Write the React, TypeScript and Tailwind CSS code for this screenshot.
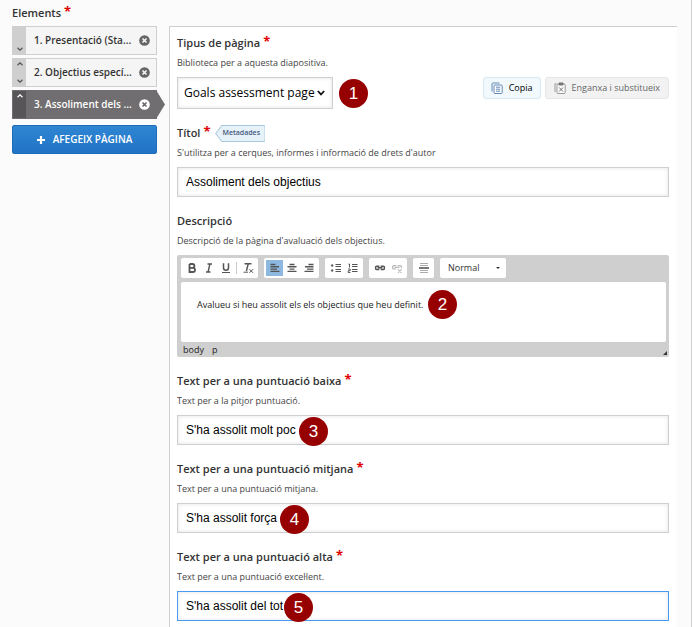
import { ReactNode, useState } from "react"

type Step = {
  id: number,
  label: string
};

type FieldProps = {
  id: string,
  label: string,
  description: string,
  required?: boolean,
  extra?: ReactNode,
  children: ReactNode
};

type TextFieldProps = {
  id: string,
  label: string,
  description: string,
  value: string,
  required?: boolean,
  focused?: boolean,
  extra?: ReactNode,
  children?: ReactNode
};

const steps: Step[] = [
  { id: 1, label: "1. Presentació (Sta..." },
  { id: 2, label: "2. Objectius especí..." },
  { id: 3, label: "3. Assoliment dels ..." }
];

function Required() {
  return <span className="ml-[3px] text-[13px] leading-4 font-bold text-[#e00000]" aria-hidden="true">*</span>
}

function Marker({ n, className }: { n: number, className: string }) {
  return (
    <span className={"absolute flex h-[29px] w-[29px] items-center justify-center rounded-full bg-[#970000] font-['Liberation_Sans',sans-serif] text-[17px] text-white " + className}>
      {n}
    </span>
  )
}

function Chevron({ up }: { up?: boolean }) {
  return (
    <svg viewBox="0 0 6 4" className="h-1 w-1.5" fill="none" stroke="currentColor" strokeWidth="1.2">
      <path d={up ? "M0.5 3.2 3 0.8 5.5 3.2" : "M0.5 0.8 3 3.2 5.5 0.8"} />
    </svg>
  )
}

function Field(props: FieldProps) {
  return (
    <div className="mb-3.5">
      <div className="flex h-5 items-center">
        <label htmlFor={props.id} className="flex h-5 text-[11px] leading-5 font-semibold text-[#333]">
          {props.label}
          {props.required && <Required />}
        </label>
        {props.extra}
      </div>
      <p className="mb-1 text-[9px] leading-5 text-[#444]">{props.description}</p>
      {props.children}
    </div>
  )
}

function TextField(props: TextFieldProps) {
  const [value, setValue] = useState<string>(props.value);
  const border = props.focused ? "border-[#4a9bf0]" : "border-[#cfcfcf]";

  return (
    <Field id={props.id} label={props.label} description={props.description} required={props.required} extra={props.extra}>
      <div className="relative">
        <input id={props.id} type="text" value={value} onChange={e => setValue(e.target.value)}
          className={"block h-[30px] w-full border bg-white px-2 font-['Liberation_Sans',sans-serif] text-[12px] text-black shadow-[inset_0_0_4px_#e4e4e4] outline-none " + border} />
        {props.children}
      </div>
    </Field>
  )
}

function ToolGroup({ children }: { children: ReactNode }) {
  return <div className="flex h-5 items-center rounded-[2px] bg-white px-0.5">{children}</div>
}

function Tool({ name, active, faded, children }: { name: string, active?: boolean, faded?: boolean, children: ReactNode }) {
  return (
    <button type="button" aria-label={name}
      className={"flex h-4 w-[17px] items-center justify-center text-[#555] " + (active ? "bg-[#8db8df] " : "") + (faded ? "opacity-40" : "")}>
      <svg viewBox="0 0 12 12" className="h-3 w-3" fill="none" stroke="currentColor" strokeWidth="1.2">{children}</svg>
    </button>
  )
}

function Toolbar() {
  return (
    <div className="flex flex-wrap gap-1.5">
      <ToolGroup>
        <Tool name="Negreta"><path strokeWidth="1.8" d="M3.5 2h3a1.9 1.9 0 0 1 0 3.8h-3M3.5 5.8h3.4a2.1 2.1 0 0 1 0 4.2H3.5zM3.5 2v8" /></Tool>
        <Tool name="Cursiva"><path strokeWidth="1.4" d="M4.5 2h4.5M3 10h4.5M6.9 2 5.1 10" /></Tool>
        <Tool name="Subratllat"><path strokeWidth="1.5" d="M3.5 1.2v4.6a2.5 2.5 0 0 0 5 0V1.2" /><path strokeWidth="1" d="M2 10.5h8" /></Tool>
        <span className="flex w-[5px] justify-center"><span className="h-3 w-px bg-[#ccc]" /></span>
        <Tool name="Elimina el format"><path strokeWidth="1.4" d="M2.5 1.8h7M6.2 2 4.4 9" /><path strokeWidth="1" d="M1.5 10.2h4.5M7.5 7.2l3.5 3.6M11 7.2 7.5 10.8" /></Tool>
      </ToolGroup>
      <ToolGroup>
        <Tool name="Esquerra" active><path strokeWidth="1.4" d="M1.5 2.5h5M1.5 4.8h8.5M1.5 7.1h6.5M1.5 9.4h9" /></Tool>
        <Tool name="Centre"><path strokeWidth="1.4" d="M3.5 2.5h5M1.5 4.8h9M3.5 7.1h5M1.5 9.4h9" /></Tool>
        <Tool name="Dreta"><path strokeWidth="1.4" d="M5.5 2.5h5M2 4.8h8.5M4 7.1h6.5M1.5 9.4h9" /></Tool>
      </ToolGroup>
      <ToolGroup>
        <Tool name="Llista de pics"><circle cx="2.2" cy="3.5" r="1" fill="currentColor" strokeWidth="0.4" /><circle cx="2.2" cy="8.5" r="1" fill="currentColor" strokeWidth="0.4" /><path strokeWidth="1" d="M5.5 2.5h5.5M5.5 4.5h5.5M5.5 7.5h5.5M5.5 9.5h5.5" /></Tool>
        <Tool name="Llista numerada"><path strokeWidth="1" d="M1.5 2h1v3.5M1.2 7h2v1.7h-2v1.8h2.2M5 2.5h5.5M5 4.5h5.5M5 7.5h5.5M5 9.5h5.5" /></Tool>
      </ToolGroup>
      <ToolGroup>
        <Tool name="Enllaç"><path strokeWidth="1.5" d="M5.3 4.2H2.6a1 1 0 0 0-1 1v1.2a1 1 0 0 0 1 1h2.7M6.7 4.2h2.7a1 1 0 0 1 1 1v1.2a1 1 0 0 1-1 1H6.7M3.6 5.8h4.8" /></Tool>
        <Tool name="Treu l'enllaç" faded><path d="M5.3 3.7H2.6a1 1 0 0 0-1 1v1.2a1 1 0 0 0 1 1h2.2M6.7 3.7h2.7a1 1 0 0 1 1 1v1.4M3.6 5.3h4.8M7 7.3l3.5 3.5M10.5 7.3 7 10.8" /></Tool>
      </ToolGroup>
      <ToolGroup>
        <Tool name="Línia horitzontal"><path strokeWidth="1" stroke="#aaa" d="M2 1.5h8M2 3.5h8M2 8.5h8M2 10.5h8" /><path strokeWidth="1.6" d="M1 6h10" /></Tool>
      </ToolGroup>
      <div className="relative flex h-5 w-[66px] items-center">
        <select aria-label="Format" className="h-5 w-full appearance-none rounded-[2px] bg-white pl-2 text-[9px] text-[#333] outline-none">
          <option>Normal</option>
        </select>
        <svg viewBox="0 0 4 2" className="pointer-events-none absolute right-1.5 h-0.5 w-1" fill="#333"><path d="M0 0h4L2 2z" /></svg>
      </div>
    </div>
  )
}

function Sidebar() {
  const [current, setCurrent] = useState<number>(3);

  return (
    <nav className="w-[145px] shrink-0">
      <ul className="flex flex-col gap-[3px]">
        {steps.map((step, i) => {
          const active = step.id === current;
          return (
            <li key={step.id} className={"relative flex h-[29px] items-stretch border " + (active ? "border-[#706e70] bg-[#706e70] text-white" : "border-[#cfcfcf] bg-[#f5f5f5] text-[#333]")}>
              <div className={"flex w-[13px] shrink-0 flex-col items-center justify-between py-[3px] " + (active ? "bg-[#575558] text-white" : "bg-[#cfcfcf] text-[#555]")}>
                {i > 0 ? <Chevron up /> : <span />}
                {i < steps.length - 1 ? <Chevron /> : <span />}
              </div>
              <button type="button" onClick={() => setCurrent(step.id)} className="grow pl-2 text-left text-[10px] font-semibold whitespace-nowrap">{step.label}</button>
              <button type="button" aria-label="Elimina" className="mr-1.5 shrink-0">
                <svg viewBox="0 0 12 12" className="h-[11px] w-[11px]">
                  <circle cx="6" cy="6" r="5.8" fill={active ? "#fff" : "#666"} />
                  <path d="M3.8 3.8l4.4 4.4M8.2 3.8 3.8 8.2" stroke={active ? "#666" : "#f5f5f5"} strokeWidth="1.7" />
                </svg>
              </button>
              {active && <svg viewBox="0 0 8 29" className="absolute -inset-y-px left-full h-[29px] w-[9px]" preserveAspectRatio="none" fill="#706e70"><path d="M0 0l8 14.5L0 29z" /></svg>}
            </li>
          )
        })}
      </ul>
      <button type="button" className="mt-1.5 flex h-[29px] w-full items-center justify-center gap-2 rounded-[2px] border border-[#1f6db8] bg-linear-to-b from-[#2f86d2] to-[#2173c6] text-[10px] font-semibold text-white">
        <svg viewBox="0 0 8 8" className="h-2 w-2" stroke="#fff" strokeWidth="2.2"><path d="M4 0v8M0 4h8" /></svg>
        AFEGEIX PÀGINA
      </button>
    </nav>
  )
}

export default function App() {
  const [body, setBody] = useState<string>("Avalueu si heu assolit els els objectius que heu definit.");

  const metadata = (
    <button type="button" className="relative ml-1 flex h-[17px] items-center text-[7px] font-semibold text-[#44597f]">
      <svg viewBox="0 0 52 16" className="absolute inset-0 h-full w-full" preserveAspectRatio="none">
        <path d="M7 .5h43a1.5 1.5 0 0 1 1.5 1.5v12a1.5 1.5 0 0 1-1.5 1.5H7L.7 8z" fill="#e6f1f8" stroke="#a9c8dc" />
      </svg>
      <span className="relative pr-[5px] pl-2">Metadades</span>
    </button>
  );

  return (
    <div className="min-h-screen bg-white pr-2 font-['Open_Sans',sans-serif]">
      <main className="min-h-screen border-r border-[#cfcfcf] bg-[#fbfbfb] pl-3">
        <h1 className="flex h-[26px] pt-[3px] text-[11px] leading-5 font-semibold text-[#333]">Elements<Required /></h1>
        <div className="flex items-start gap-3">
          <Sidebar />
          <section className="mr-3.5 min-w-0 grow border-t border-l border-[#cfcfcf] bg-white pt-1.5 pr-2 pl-[7px]">
            <Field id="type" label="Tipus de pàgina" description="Biblioteca per a aquesta diapositiva." required>
              <div className="flex items-start justify-between">
                <div className="relative flex items-center">
                  <select id="type" className="h-8 w-[156px] appearance-none border border-[#cfcfcf] bg-white pl-1.5 text-[12px] text-black shadow-[inset_0_0_4px_#e4e4e4] outline-none">
                    <option>Goals assessment page</option>
                  </select>
                  <svg viewBox="0 0 8 6" className="pointer-events-none absolute right-2 h-1.5 w-2" fill="none" stroke="#111" strokeWidth="1.7"><path d="M.8 1 4 4.4 7.2 1" /></svg>
                  <Marker n={1} className="top-0.5 left-[162px]" />
                </div>
                <div className="flex gap-1">
                  <button type="button" className="flex h-[22px] items-center gap-1.5 rounded-[3px] border border-[#d7eaf0] bg-[#f1f9fd] px-[7px] text-[9px] text-black">
                    <svg viewBox="0 0 12 12" className="h-3 w-3" fill="none" stroke="#6288b5">
                      <path d="M1 9.5V1.8A1 1 0 0 1 2 1h6.5" /><rect x="3" y="3" width="8.2" height="8.5" rx="1" fill="#fff" /><path d="M5 5.2h4.2M5 7.2h4.2M5 9.2h4.2" />
                    </svg>
                    Copia
                  </button>
                  <button type="button" className="flex h-[22px] items-center gap-1.5 rounded-[3px] border border-[#e6e6e6] bg-[#f2f2f2] px-2 text-[9px] text-[#666]">
                    <svg viewBox="0 0 12 12" className="h-3 w-3" fill="none" stroke="#999">
                      <path d="M1 10V1.8h1.5" /><rect x="3" y="2" width="8.2" height="9.5" rx="1" fill="#fafafa" /><path fill="#777" stroke="#777" d="M5 1h4v2H5z" /><path d="M5.2 5.5 9 9.5M9 5.5 5.2 9.5" stroke="#777" />
                    </svg>
                    Enganxa i substitueix
                  </button>
                </div>
              </div>
            </Field>

            <TextField id="title" label="Títol" description="S'utilitza per a cerques, informes i informació de drets d'autor" value="Assoliment dels objectius" required extra={metadata} />

            <Field id="body" label="Descripció" description="Descripció de la pàgina d'avaluació dels objectius.">
              <div className="relative rounded-[2px] bg-[#cfcfcf] pt-[3px] pr-[3px] pl-1">
                <Toolbar />
                <div className="relative mt-1">
                  <textarea id="body" value={body} onChange={e => setBody(e.target.value)}
                    className="block h-[60px] w-full resize-none rounded-[2px] bg-white px-4 py-3.5 text-[9px] leading-[18px] text-[#222] outline-none" />
                  <Marker n={2} className="top-2 left-[247px]" />
                </div>
                <div className="flex h-[15px] items-center gap-2 pl-0.5 text-[9px] text-[#222]">
                  <button type="button">body</button>
                  <button type="button">p</button>
                </div>
                <svg viewBox="0 0 4 4" className="absolute right-0.5 bottom-0.5 h-1 w-1" fill="#333"><path d="M4 0v4H0z" /></svg>
              </div>
            </Field>

            <TextField id="low" label="Text per a una puntuació baixa" description="Text per a la pitjor puntuació." value="S'ha assolit molt poc" required>
              <Marker n={3} className="top-0.5 left-[122px]" />
            </TextField>
            <TextField id="mid" label="Text per a una puntuació mitjana" description="Text per a una puntuació mitjana." value="S'ha assolit força" required>
              <Marker n={4} className="top-0.5 left-[103px]" />
            </TextField>
            <TextField id="high" label="Text per a una puntuació alta" description="Text per a una puntuació exceŀlent." value="S'ha assolit del tot" required focused>
              <Marker n={5} className="top-0.5 left-[107px]" />
            </TextField>
          </section>
        </div>
      </main>
    </div>
  )
}
